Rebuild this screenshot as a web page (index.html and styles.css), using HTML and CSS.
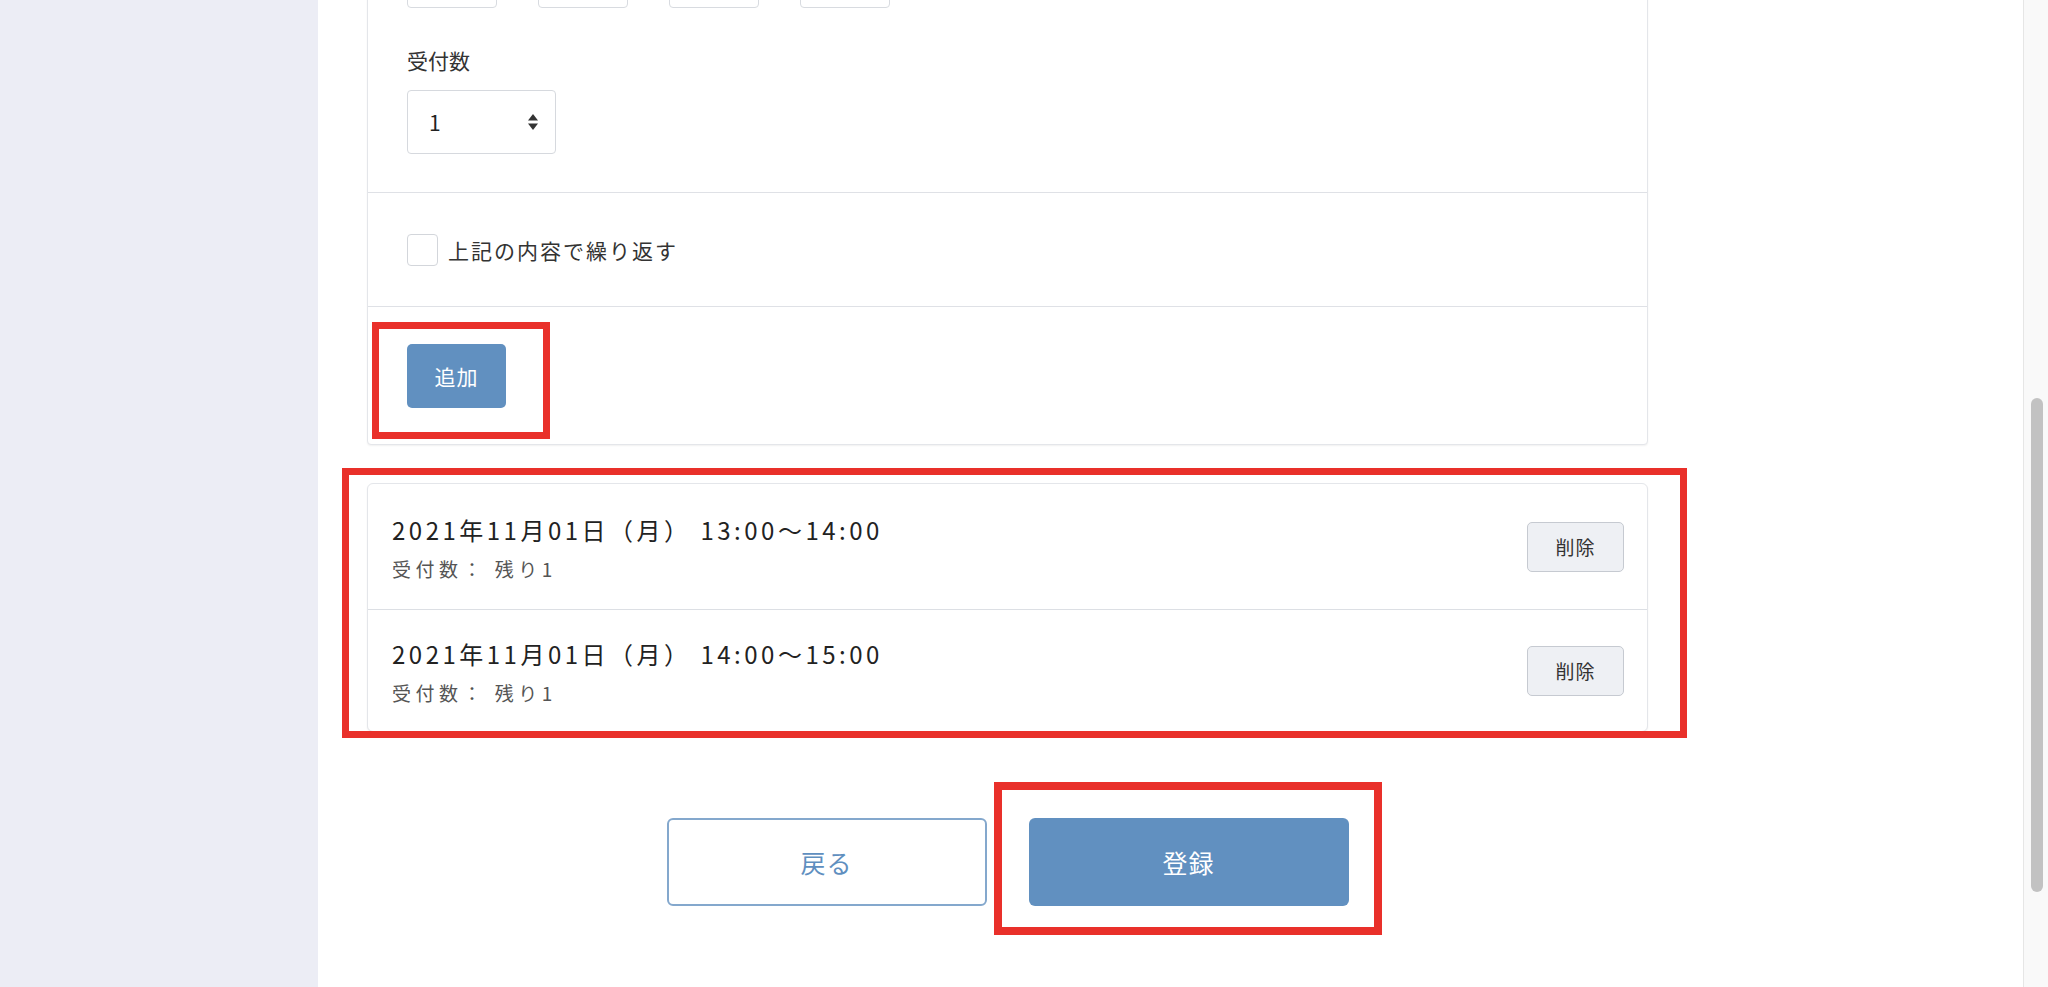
FILE: index.html
```html
<!DOCTYPE html>
<html lang="ja">
<head>
<meta charset="utf-8">
<title>受付枠登録</title>
<link rel="stylesheet" href="styles.css">
</head>
<body>
<div class="layout">
  <aside class="sidebar"></aside>
  <main class="main">
    <div class="content">
      <section class="card form-card">
        <div class="section section-fields">
          <div class="time-row">
            <div class="time-box"></div>
            <div class="time-box"></div>
            <div class="time-box"></div>
            <div class="time-box"></div>
          </div>
          <label class="field-label">受付数</label>
          <div class="select">
            <span class="select-value">1</span>
            <svg class="select-arrows" width="12" height="18" viewBox="0 0 12 18"><path d="M6 1 L11 7.5 H1 Z" fill="#333"/><path d="M6 17 L11 10.5 H1 Z" fill="#333"/></svg>
          </div>
        </div>
        <div class="section section-repeat">
          <span class="checkbox"></span>
          <span class="check-label">上記の内容で繰り返す</span>
        </div>
        <div class="section section-add">
          <button class="btn btn-primary btn-add">追加</button>
          <div class="highlight highlight-add"></div>
        </div>
      </section>

      <div class="list-wrap">
        <section class="card list-card">
          <div class="slot">
            <div class="slot-info">
              <div class="slot-title">2021年11月01日（月） 13:00〜14:00</div>
              <div class="slot-sub">受付数： 残り1</div>
            </div>
            <button class="btn btn-delete">削除</button>
          </div>
          <div class="slot">
            <div class="slot-info">
              <div class="slot-title">2021年11月01日（月） 14:00〜15:00</div>
              <div class="slot-sub">受付数： 残り1</div>
            </div>
            <button class="btn btn-delete">削除</button>
          </div>
        </section>
        <div class="highlight highlight-list"></div>
      </div>

      <div class="actions">
        <button class="btn btn-outline btn-large">戻る</button>
        <div class="submit-wrap">
          <button class="btn btn-primary btn-large">登録</button>
          <div class="highlight highlight-submit"></div>
        </div>
      </div>
    </div>
  </main>
  <div class="scrollbar"><div class="scroll-thumb"></div></div>
</div>
</body>
</html>
```
FILE: styles.css
```css
* { box-sizing: border-box; }
html, body { margin: 0; padding: 0; }
body {
  font-family: "Noto Sans CJK JP", "Noto Sans", sans-serif;
  color: #222;
  background: #fff;
  overflow: hidden;
}
.layout {
  display: flex;
  width: 2048px;
  height: 987px;
  overflow: hidden;
}
.sidebar {
  width: 318px;
  flex: none;
  background: #ecedf5;
}
.main {
  flex: 1;
  background: #fff;
  overflow: hidden;
}
.content {
  width: 1281px;
  margin-left: 49px;
  margin-top: -57px;
}
.card {
  background: #fff;
  border: 1px solid #e4e6ea;
  border-radius: 4px;
  box-shadow: 0 1px 2px rgba(0,0,0,0.06);
}
.section {
  position: relative;
  padding-left: 39px;
  border-top: 1px solid #dfe1e6;
}
.section:first-child { border-top: none; }
.section-fields {
  padding-top: 0;
  height: 248px;
}
.time-row {
  display: flex;
  gap: 41px;
}
.time-box {
  width: 90px;
  height: 64px;
  border: 1px solid #d8dbe0;
  border-radius: 4px;
}
.field-label {
  display: block;
  margin-top: 37px;
  font-size: 21px;
  line-height: 30px;
  color: #333;
}
.select {
  margin-top: 15px;
  width: 149px;
  height: 64px;
  border: 1px solid #d6d9de;
  border-radius: 4px;
  display: flex;
  align-items: center;
  justify-content: space-between;
  padding: 0 16px 0 21px;
}
.select-value {
  font-size: 21px;
  color: #222;
}
.section-repeat {
  height: 114px;
  display: flex;
  align-items: center;
  gap: 10px;
}
.checkbox {
  width: 31px;
  height: 32px;
  border: 1px solid #d3d6db;
  border-radius: 4px;
  background: #fff;
}
.check-label {
  font-size: 21px;
  letter-spacing: 2px;
  color: #333;
}
.section-add {
  padding-top: 37px;
  padding-bottom: 36px;
}
.btn {
  font-family: "Noto Sans CJK JP", "Noto Sans", sans-serif;
  border: none;
  cursor: pointer;
  padding: 0;
}
.btn-primary {
  background: #6190c0;
  color: #fff;
}
.btn-add {
  width: 99px;
  height: 64px;
  border-radius: 5px;
  font-size: 21px;
  letter-spacing: 1px;
}
.highlight {
  position: absolute;
  border: 7px solid #e9302a;
  pointer-events: none;
}
.highlight-add {
  left: 4px;
  top: 15px;
  width: 178px;
  height: 117px;
}
.list-wrap {
  position: relative;
  margin-top: 38px;
}
.list-card {
  border-radius: 6px;
}
.slot {
  display: flex;
  align-items: center;
  justify-content: space-between;
  padding: 0 23px 0 24px;
  height: 125px;
}
.slot + .slot {
  border-top: 1px solid #dcdfe4;
  height: 122px;
}
.slot-title {
  font-size: 24px;
  line-height: 34px;
  letter-spacing: 3.5px;
  color: #222;
}
.slot-sub {
  margin-top: 10px;
  font-size: 19px;
  line-height: 24px;
  letter-spacing: 4.5px;
  color: #555;
}
.btn-delete {
  width: 97px;
  height: 50px;
  background: #eef0f4;
  border: 1px solid #c6cad1;
  border-radius: 5px;
  font-size: 19px;
  color: #333;
  letter-spacing: 1px;
}
.highlight-list {
  left: -25px;
  top: -15px;
  right: -39px;
  bottom: -6px;
}
.actions {
  display: flex;
  justify-content: center;
  gap: 42px;
  margin-top: 86px;
}
.btn-large {
  width: 320px;
  height: 88px;
  border-radius: 6px;
  font-size: 25px;
  letter-spacing: 1px;
}
.btn-outline {
  background: #fff;
  border: 2px solid #84a8cd;
  color: #5f8fbf;
}
.submit-wrap {
  position: relative;
}
.highlight-submit {
  left: -35px;
  top: -36px;
  right: -33px;
  bottom: -29px;
  border-width: 8px;
}
.scrollbar {
  width: 25px;
  flex: none;
  background: #f9f9f9;
  border-left: 1px solid #e6e6e6;
  padding-top: 398px;
  padding-left: 7px;
}
.scroll-thumb {
  width: 12px;
  height: 494px;
  background: #c2c2c2;
  border-radius: 6px;
}
```
